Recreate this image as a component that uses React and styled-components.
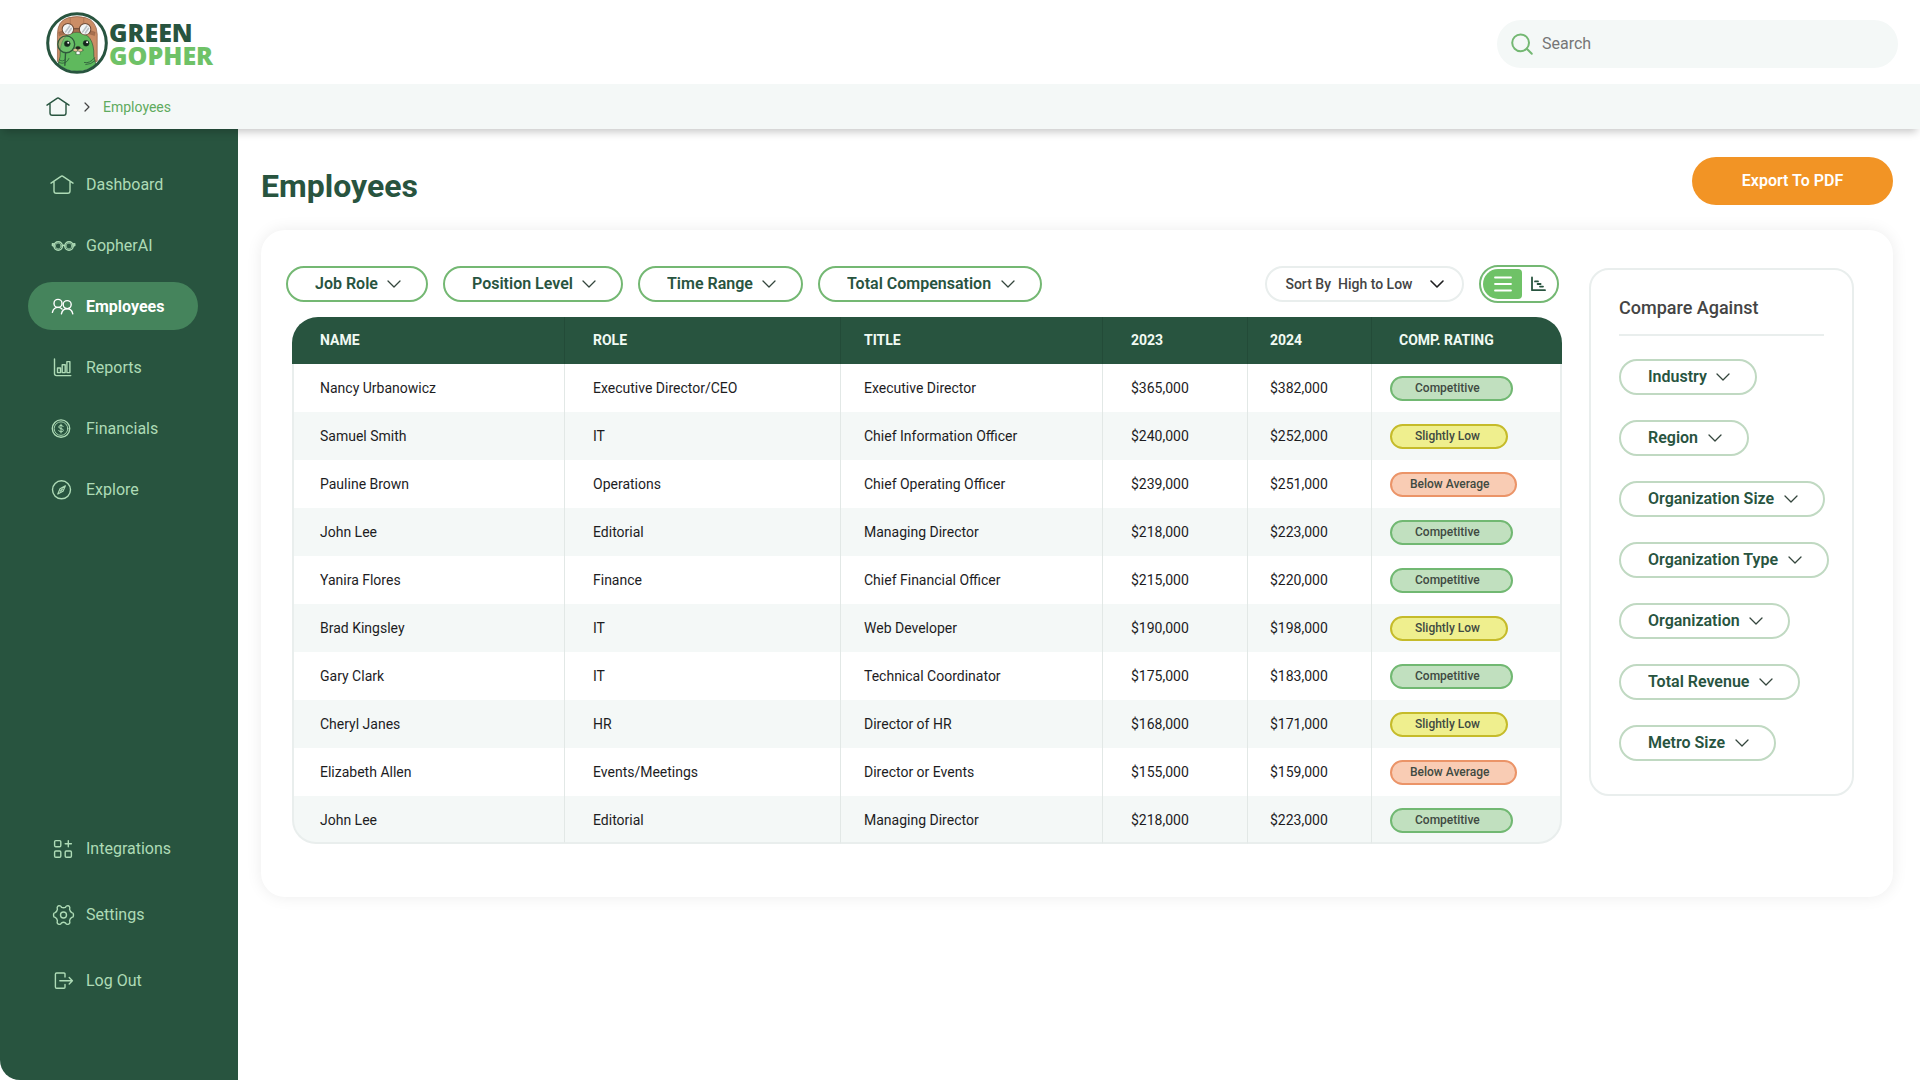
import React, { useState } from "react";
import styled, { createGlobalStyle, css } from "styled-components";

const color = {
  forest: "#28543f",
  leaf: "#6fc267",
  leafBorder: "#74b873",
  mint: "#aedbb6",
  mist: "#f4f8f7",
  line: "#e9eeed",
  ink: "#1d1d1f",
  text: "#444444",
  orange: "#f29425",
};

const GlobalStyle = createGlobalStyle`
  *, *::before, *::after { box-sizing: border-box; }
  body {
    margin: 0;
    background: #ffffff;
    color: ${color.ink};
    font-family: Roboto, "Liberation Sans", sans-serif;
  }
  button, input, select { font-family: inherit; }
`;

const Page = styled.div`
  display: flex;
  flex-direction: column;
  min-height: 100vh;
`;

const TopBar = styled.header`
  display: flex;
  align-items: center;
  justify-content: space-between;
  height: 84px;
  padding: 4px 22px 0 46px;
`;

const Brand = styled.a`
  display: flex;
  align-items: center;
  gap: 1px;
  padding-bottom: 2px;
  text-decoration: none;
`;

const BrandName = styled.span`
  display: flex;
  flex-direction: column;
  padding-top: 2px;
  color: ${color.forest};
  font-family: "Open Sans", Lato, sans-serif;
  font-size: 25px;
  font-weight: 800;
  line-height: 23px;
`;

const BrandAccent = styled.span`
  color: ${color.leaf};
`;

const SearchBox = styled.label`
  display: flex;
  align-items: center;
  gap: 8px;
  width: 401px;
  height: 48px;
  padding: 0 14px;
  border-radius: 24px;
  background: ${color.mist};
`;

const SearchInput = styled.input`
  flex: 1;
  min-width: 0;
  padding: 0;
  border: 0;
  outline: 0;
  background: transparent;
  color: ${color.text};
  font-size: 16px;
  line-height: 24px;
  &::placeholder { color: #767676; opacity: 1; }
`;

const Crumbs = styled.nav`
  position: relative;
  z-index: 1;
  display: flex;
  align-items: center;
  gap: 14px;
  height: 45px;
  padding: 0 46px;
  background: ${color.mist};
  box-shadow: 0 6px 8px -3px rgba(0, 0, 0, 0.22);
`;

const CrumbHome = styled.a`
  display: flex;
  color: ${color.forest};
`;

const CrumbLink = styled.a`
  color: #5fab5e;
  font-size: 14px;
  line-height: 20px;
  text-decoration: none;
`;

const Body = styled.div`
  display: flex;
  flex: 1;
`;

const Sidebar = styled.nav`
  display: flex;
  flex: none;
  flex-direction: column;
  justify-content: space-between;
  width: 238px;
  padding: 31px 28px 76px;
  border-bottom-left-radius: 20px;
  background: ${color.forest};
`;

const NavList = styled.div`
  display: flex;
  flex-direction: column;
  gap: ${(p) => p.$gap}px;
`;

const NavItem = styled.a`
  display: flex;
  align-items: center;
  gap: 12px;
  width: 170px;
  height: 48px;
  padding: 2px 0 0 22px;
  border-radius: 24px;
  color: ${color.mint};
  font-size: 16px;
  line-height: 24px;
  text-decoration: none;
  ${(p) =>
    p.$active &&
    css`
      background: #45845c;
      color: #ffffff;
      font-weight: 700;
    `}
`;

const Main = styled.main`
  flex: 1;
  min-width: 0;
  padding: 28px 27px 40px 23px;
`;

const TitleRow = styled.div`
  display: flex;
  align-items: flex-start;
  justify-content: space-between;
  margin-bottom: 25px;
`;

const Title = styled.h1`
  margin: 0;
  padding-top: 10px;
  color: ${color.forest};
  font-size: 32px;
  font-weight: 700;
  line-height: 38px;
`;

const ExportButton = styled.button`
  width: 201px;
  height: 48px;
  padding: 0 0 2px;
  border: 0;
  border-radius: 24px;
  background: ${color.orange};
  color: #ffffff;
  font-size: 16px;
  font-weight: 600;
  cursor: pointer;
`;

const Card = styled.section`
  display: flex;
  align-items: flex-start;
  gap: 27px;
  padding: 35px 39px 53px 25px;
  border-radius: 24px;
  background: #ffffff;
  box-shadow: 0 0 16px rgba(0, 0, 0, 0.08);
`;

const Listing = styled.div`
  flex: 1;
  min-width: 0;
`;

const Toolbar = styled.div`
  display: flex;
  align-items: center;
  gap: 15px;
  height: 38px;
  padding-right: 3px;
  margin-bottom: 14px;
`;

const Spacer = styled.div`
  flex: 1;
`;

const PillFrame = styled.span`
  display: inline-grid;
  align-items: center;
  height: 36px;
  & > * { grid-area: 1 / 1; }
  & > svg {
    justify-self: end;
    margin-right: 27px;
    color: #34463d;
    pointer-events: none;
  }
`;

const PillSelect = styled.select`
  height: 36px;
  margin: 0;
  padding: 0 48px 2px 27px;
  appearance: none;
  border: 2px solid ${(p) => (p.$soft ? "#c0d9c2" : color.leafBorder)};
  border-radius: 18px;
  background: transparent;
  color: ${color.forest};
  font-size: 16px;
  font-weight: 600;
  cursor: pointer;
`;

const SortBox = styled.label`
  display: flex;
  align-items: center;
  gap: 7px;
  height: 36px;
  padding: 0 18px;
  border: 2px solid ${color.line};
  border-radius: 18px;
  color: ${color.text};
  font-size: 14px;
  font-weight: 500;
`;

const SortField = styled.span`
  display: grid;
  align-items: center;
  & > * { grid-area: 1 / 1; }
  & > svg {
    justify-self: end;
    color: ${color.ink};
    pointer-events: none;
  }
`;

const SortSelect = styled.select`
  padding: 0 31px 0 0;
  appearance: none;
  border: 0;
  background: transparent;
  color: inherit;
  font-size: 14px;
  font-weight: 500;
  cursor: pointer;
`;

const Toggle = styled.div`
  display: grid;
  grid-template-columns: 39px 1fr;
  width: 80px;
  height: 38px;
  padding: 2px;
  border: 2px solid ${color.leafBorder};
  border-radius: 19px;
`;

const ToggleButton = styled.button`
  display: flex;
  align-items: center;
  justify-content: center;
  padding: ${(p) => (p.$side === "left" ? "0" : "0 2px 0 0")};
  border: 0;
  border-radius: ${(p) => (p.$side === "left" ? "15px 4px 4px 15px" : "4px 15px 15px 4px")};
  background: ${(p) => (p.$on ? color.leaf : "transparent")};
  color: ${(p) => (p.$on ? "#ffffff" : color.forest)};
  cursor: pointer;
`;

const TableWrap = styled.div`
  padding-left: 6px;
`;

const Table = styled.table`
  width: 100%;
  table-layout: fixed;
  border-spacing: 0;
`;

const HeadCell = styled.th`
  height: 47px;
  padding: 0 0 2px ${(p) => p.$pad}px;
  background: ${color.forest};
  color: #f1faf3;
  font-size: 14px;
  font-weight: 700;
  text-align: left;
  &:not(:last-child) { border-right: 1px solid #234b38; }
  &:first-child { border-top-left-radius: 26px; }
  &:last-child { border-top-right-radius: 26px; }
`;

const Cell = styled.td`
  height: 48px;
  padding: 0 0 0 ${(p) => p.$pad}px;
  border-right: 1px solid #e2e8e6;
  font-size: 14px;
  line-height: 20px;
  white-space: nowrap;
  &:first-child {
    padding-left: 26px;
    border-left: 2px solid ${color.line};
  }
  &:last-child { border-right: 2px solid ${color.line}; }
`;

const Row = styled.tr`
  &:nth-child(even) ${Cell} { background: ${color.mist}; }
  &:last-child ${Cell} {
    padding-top: 2px;
    border-bottom: 2px solid ${color.line};
    &:first-child { border-bottom-left-radius: 24px; }
    &:last-child { border-bottom-right-radius: 24px; }
  }
`;

const ratingStyles = {
  Competitive: { width: 123, pad: 23, fill: "#c1e0bf", edge: "#71b872" },
  "Slightly Low": { width: 118, pad: 23, fill: "#efef8e", edge: "#c5bb2a" },
  "Below Average": { width: 127, pad: 18, fill: "#f9ccb4", edge: "#eb9468" },
};

const Badge = styled.span`
  display: block;
  width: ${(p) => ratingStyles[p.$rating].width}px;
  height: 25px;
  padding-left: ${(p) => ratingStyles[p.$rating].pad}px;
  border: 2px solid ${(p) => ratingStyles[p.$rating].edge};
  border-radius: 13px;
  background: ${(p) => ratingStyles[p.$rating].fill};
  color: #3f4a42;
  font-size: 12px;
  font-weight: 500;
  line-height: 20px;
`;

const ComparePanel = styled.aside`
  flex: none;
  width: 265px;
  margin-top: 3px;
  padding: 25px 0 33px 28px;
  border: 2px solid ${color.line};
  border-radius: 20px;
`;

const CompareTitle = styled.h2`
  margin: 0 28px 23px 0;
  padding-bottom: 13px;
  border-bottom: 2px solid ${color.line};
  color: ${color.text};
  font-size: 18px;
  font-weight: 500;
  line-height: 26px;
`;

const CompareList = styled.div`
  display: flex;
  flex-direction: column;
  align-items: flex-start;
  gap: 25px;
`;

const Drawing = styled.svg`
  flex: none;
  overflow: visible;
`;

const Svg = ({ w = 24, h = 24, sw = 1.4, children }) => (
  <Drawing
    width={w}
    height={h}
    viewBox={`0 0 ${w} ${h}`}
    fill="none"
    stroke="currentColor"
    strokeWidth={sw}
    strokeLinecap="round"
    strokeLinejoin="round"
    aria-hidden="true"
  >
    {children}
  </Drawing>
);

const Chevron = ({ sw = 1.3 }) => (
  <Svg w={14} h={8} sw={sw}>
    <path d="M1 1 L7 7 L13 1" />
  </Svg>
);

const HomeIcon = () => (
  <Svg>
    <path d="M1 10.2 L11.4 3.2 Q12 2.8 12.6 3.2 L23 10.2 M4 8.4 V18 Q4 20.2 6.2 20.2 H17.8 Q20 20.2 20 18 V8.4" />
  </Svg>
);

const GlassesIcon = () => (
  <Svg>
    <circle cx="8.2" cy="12" r="4.2" />
    <circle cx="19" cy="12" r="4.2" />
    <circle cx="8.2" cy="12" r="2.9" strokeWidth="0.7" />
    <circle cx="19" cy="12" r="2.9" strokeWidth="0.7" />
    <path d="M12.2 12 Q13.6 10.6 15 12 M4.4 10 L2.4 9.8 V11.6 L4 12 M22.8 10 L24.8 9.8 V11.6 L23.2 12" />
  </Svg>
);

const PeopleIcon = () => (
  <Svg>
    <circle cx="8" cy="8.4" r="4" />
    <circle cx="17.2" cy="9.6" r="4" />
    <path d="M2.4 17.4 Q3.6 12.4 8 12.4 Q10.6 12.4 12 14 M11.4 18.8 Q12.6 13.8 17.2 13.8 Q21.6 13.8 22.8 18.8" />
  </Svg>
);

const ReportsIcon = () => (
  <Svg>
    <path d="M4.5 3 V17.6 Q4.5 19.6 6.5 19.6 H20.8" />
    <path d="M7.5 16.6 V12 H10.5 V16.6 Z M12.2 16.6 V8.8 H15.2 V16.6 Z M16.9 16.6 V5.6 H19.9 V16.6 Z" />
  </Svg>
);

const CoinIcon = () => (
  <Svg>
    <circle cx="11" cy="11.6" r="8.7" />
    <circle cx="11" cy="11.6" r="6.8" strokeWidth="0.9" />
    <path
      d="M13.2 9.6 Q12.8 8.4 11 8.4 Q8.8 8.4 8.8 10 Q8.8 11.3 11 11.6 Q13.3 11.9 13.3 13.3 Q13.3 14.8 11 14.8 Q9 14.8 8.7 13.5 M11 7.2 V16"
      strokeWidth="1"
    />
  </Svg>
);

const CompassIcon = () => (
  <Svg>
    <circle cx="11.5" cy="11.8" r="9" />
    <path d="M15.4 7.8 L13 13.2 L7.8 16 L10 10.8 Z M12.4 11 L10.6 13" strokeWidth="1.2" />
  </Svg>
);

const IntegrationsIcon = () => (
  <Svg>
    <rect x="4.6" y="3.6" width="6.2" height="6.2" rx="1.2" />
    <rect x="4.6" y="14" width="6.2" height="6.2" rx="1.2" />
    <rect x="15.2" y="14" width="6.2" height="6.2" rx="1.2" />
    <path d="M18.3 3.6 V9.8 M15.2 6.7 H21.4" />
  </Svg>
);

const GearIcon = () => (
  <Svg>
    <circle cx="13.5" cy="12" r="3" />
    <path d="M11.6 4.4 Q10.6 2.4 9 2.6 L7.6 3.4 Q6.8 4.2 7.4 6.4 Q7 8.6 5.2 9.6 Q3.6 9.8 3.6 11 V13 Q3.6 14.2 5.2 14.4 Q7 15.4 7.4 17.6 Q6.8 19.8 7.6 20.6 L9 21.4 Q10.6 21.6 11.6 19.8 Q13.5 18.8 15.4 19.8 Q16.4 21.6 18 21.4 L19.4 20.6 Q20.2 19.8 19.6 17.6 Q20 15.4 21.8 14.4 Q23.4 14.2 23.4 13 V11 Q23.4 9.8 21.8 9.6 Q20 8.6 19.6 6.4 Q20.2 4.2 19.4 3.4 L18 2.6 Q16.4 2.4 15.4 4.4 Q13.5 5.2 11.6 4.4 Z" />
  </Svg>
);

const LogoutIcon = () => (
  <Svg>
    <path d="M15 8 V5 Q15 4 14 4 H6.6 Q5.4 4 5.4 5.2 V18 Q5.4 19.2 6.6 19.2 H14 Q15 19.2 15 18.2 V15.4" />
    <path d="M9.8 11.7 H22.4 M19.2 8.4 L22.4 11.7 L19.2 15" />
  </Svg>
);

const SearchIcon = () => (
  <Svg w={23} h={24} sw={2}>
    <g stroke={color.leafBorder}>
      <circle cx="9.6" cy="10.8" r="8.4" />
      <path d="M15.8 16.8 L20.8 21.8" />
    </g>
  </Svg>
);

const GopherLogo = () => (
  <Drawing width="62" height="62" viewBox="0 0 184 184" aria-hidden="true">
    <defs>
      <clipPath id="badge">
        <circle cx="92" cy="92" r="84" />
      </clipPath>
    </defs>
    <circle cx="92" cy="92" r="86" fill="#ffffff" />
    <g clipPath="url(#badge)" stroke="#2f5a3c" strokeLinecap="round" strokeLinejoin="round">
      <path
        d="M34 146 V66 Q34 26 66 17 Q92 10 118 17 Q150 26 152 66 V146 L140 152 L46 152 Z"
        fill="#cb8d66"
        stroke="#8a5a40"
        strokeWidth="2"
      />
      <path d="M72 17 V40 M112 17 V40" stroke="#a66f4f" strokeWidth="2" />
      <path d="M30 190 Q34 160 42 132 Q40 62 92 60 Q144 62 142 132 Q150 160 154 190 Z" fill="#5fb95d" strokeWidth="2" />
      <path d="M38 60 Q92 36 146 60 L144 70 Q92 48 40 70 Z" fill="#a66f4f" stroke="#8a5a40" strokeWidth="1" />
      <g strokeWidth="3" stroke="#6f4c38">
        <circle cx="65" cy="51" r="17" fill="#f3f5f6" />
        <circle cx="116" cy="51" r="17" fill="#f3f5f6" />
        <path d="M82 50 H99" />
      </g>
      <g stroke="#b9c1c6" strokeWidth="5">
        <path d="M58 59 L70 42 M66 62 L75 49" />
        <path d="M109 59 L121 42 M117 62 L126 49" />
      </g>
      <circle cx="60" cy="96" r="25" fill="#7cc87a" fillOpacity="0.5" strokeWidth="4" />
      <path d="M58 122 L56 158" strokeWidth="4" />
      <circle cx="63" cy="94" r="9" fill="#16251d" strokeWidth="1" />
      <circle cx="119" cy="93" r="9" fill="#16251d" strokeWidth="1" />
      <circle cx="66" cy="91" r="3" fill="#ffffff" stroke="none" />
      <circle cx="122" cy="90" r="3" fill="#ffffff" stroke="none" />
      <path d="M90 114 H101 V126 H90 Z" fill="#ffffff" strokeWidth="1.5" />
      <ellipse cx="88" cy="113" rx="8" ry="5" fill="#e6bf91" strokeWidth="1.5" />
      <ellipse cx="102" cy="113" rx="8" ry="5" fill="#e6bf91" strokeWidth="1.5" />
      <ellipse cx="95" cy="106" rx="7" ry="4.5" fill="#27211c" strokeWidth="1" />
      <path
        d="M38 150 Q60 158 68 138 M40 142 Q50 150 58 140 M114 150 Q130 154 144 136 M118 156 Q134 156 146 144"
        fill="none"
        strokeWidth="2.5"
      />
    </g>
    <circle cx="92" cy="92" r="87" fill="none" stroke={color.forest} strokeWidth="9" />
  </Drawing>
);

const primaryNav = [
  ["Dashboard", HomeIcon],
  ["GopherAI", GlassesIcon],
  ["Employees", PeopleIcon],
  ["Reports", ReportsIcon],
  ["Financials", CoinIcon],
  ["Explore", CompassIcon],
];

const secondaryNav = [
  ["Integrations", IntegrationsIcon],
  ["Settings", GearIcon],
  ["Log Out", LogoutIcon],
];

const filters = ["Job Role", "Position Level", "Time Range", "Total Compensation"];

const comparisons = [
  "Industry",
  "Region",
  "Organization Size",
  "Organization Type",
  "Organization",
  "Total Revenue",
  "Metro Size",
];

const columns = [
  { label: "NAME", width: 273, headPad: 28, pad: 28 },
  { label: "ROLE", width: 276, headPad: 28, pad: 28 },
  { label: "TITLE", width: 262, headPad: 23, pad: 23 },
  { label: "2023", width: 145, headPad: 28, pad: 28 },
  { label: "2024", width: 124, headPad: 22, pad: 22 },
  { label: "COMP. RATING", width: 190, headPad: 27, pad: 18 },
];

const employees = [
  ["Nancy Urbanowicz", "Executive Director/CEO", "Executive Director", "$365,000", "$382,000", "Competitive"],
  ["Samuel Smith", "IT", "Chief Information Officer", "$240,000", "$252,000", "Slightly Low"],
  ["Pauline Brown", "Operations", "Chief Operating Officer", "$239,000", "$251,000", "Below Average"],
  ["John Lee", "Editorial", "Managing Director", "$218,000", "$223,000", "Competitive"],
  ["Yanira Flores", "Finance", "Chief Financial Officer", "$215,000", "$220,000", "Competitive"],
  ["Brad Kingsley", "IT", "Web Developer", "$190,000", "$198,000", "Slightly Low"],
  ["Gary Clark", "IT", "Technical Coordinator", "$175,000", "$183,000", "Competitive"],
  ["Cheryl Janes", "HR", "Director of HR", "$168,000", "$171,000", "Slightly Low"],
  ["Elizabeth Allen", "Events/Meetings", "Director or Events", "$155,000", "$159,000", "Below Average"],
  ["John Lee", "Editorial", "Managing Director", "$218,000", "$223,000", "Competitive"],
];

function Dropdown({ label, soft }) {
  return (
    <PillFrame>
      <PillSelect aria-label={label} $soft={soft}>
        <option>{label}</option>
      </PillSelect>
      <Chevron />
    </PillFrame>
  );
}

function Navigation({ items, gap }) {
  return (
    <NavList $gap={gap}>
      {items.map(([label, Icon]) => (
        <NavItem
          key={label}
          href="#"
          $active={label === "Employees"}
          aria-current={label === "Employees" ? "page" : undefined}
        >
          <Icon />
          {label}
        </NavItem>
      ))}
    </NavList>
  );
}

function EmployeeTable() {
  return (
    <TableWrap>
      <Table>
        <colgroup>
          {columns.map((c) => (
            <col key={c.label} width={c.width} />
          ))}
        </colgroup>
        <thead>
          <tr>
            {columns.map((c) => (
              <HeadCell key={c.label} scope="col" $pad={c.headPad}>
                {c.label}
              </HeadCell>
            ))}
          </tr>
        </thead>
        <tbody>
          {employees.map((row, r) => (
            <Row key={r}>
              {row.map((value, i) => (
                <Cell key={i} $pad={columns[i].pad}>
                  {i === 5 ? <Badge $rating={value}>{value}</Badge> : value}
                </Cell>
              ))}
            </Row>
          ))}
        </tbody>
      </Table>
    </TableWrap>
  );
}

export default function App() {
  const [view, setView] = useState("list");
  return (
    <Page>
      <GlobalStyle />
      <TopBar>
        <Brand href="#">
          <GopherLogo />
          <BrandName>
            GREEN
            <BrandAccent>GOPHER</BrandAccent>
          </BrandName>
        </Brand>
        <SearchBox>
          <SearchIcon />
          <SearchInput type="search" placeholder="Search" aria-label="Search" />
        </SearchBox>
      </TopBar>
      <Crumbs aria-label="Breadcrumb">
        <CrumbHome href="#" aria-label="Home">
          <HomeIcon />
        </CrumbHome>
        <Svg w={5} h={10} sw={1.2}>
          <path d="M1 1 L5 5 L1 9" stroke="#444444" />
        </Svg>
        <CrumbLink href="#">Employees</CrumbLink>
      </Crumbs>
      <Body>
        <Sidebar aria-label="Main">
          <Navigation items={primaryNav} gap={13} />
          <Navigation items={secondaryNav} gap={18} />
        </Sidebar>
        <Main>
          <TitleRow>
            <Title>Employees</Title>
            <ExportButton type="button">Export To PDF</ExportButton>
          </TitleRow>
          <Card>
            <Listing>
              <Toolbar>
                {filters.map((label) => (
                  <Dropdown key={label} label={label} />
                ))}
                <Spacer />
                <SortBox>
                  Sort By
                  <SortField>
                    <SortSelect>
                      <option>High to Low</option>
                    </SortSelect>
                    <Chevron sw={1.6} />
                  </SortField>
                </SortBox>
                <Toggle>
                  <ToggleButton
                    type="button"
                    $side="left"
                    $on={view === "list"}
                    aria-label="List view"
                    onClick={() => setView("list")}
                  >
                    <Svg w={18} h={16} sw={1.8}>
                      <path d="M1 1.5 H17 M1 8 H17 M1 14.5 H17" />
                    </Svg>
                  </ToggleButton>
                  <ToggleButton
                    type="button"
                    $side="right"
                    $on={view === "chart"}
                    aria-label="Chart view"
                    onClick={() => setView("chart")}
                  >
                    <Svg w={16} h={16} sw={1.8}>
                      <path d="M2 1.5 V14.2 H15 M5 5.4 H8 M7.6 8 H10.6 M10 10.6 H13" />
                    </Svg>
                  </ToggleButton>
                </Toggle>
              </Toolbar>
              <EmployeeTable />
            </Listing>
            <ComparePanel>
              <CompareTitle>Compare Against</CompareTitle>
              <CompareList>
                {comparisons.map((label) => (
                  <Dropdown key={label} label={label} soft />
                ))}
              </CompareList>
            </ComparePanel>
          </Card>
        </Main>
      </Body>
    </Page>
  );
}
